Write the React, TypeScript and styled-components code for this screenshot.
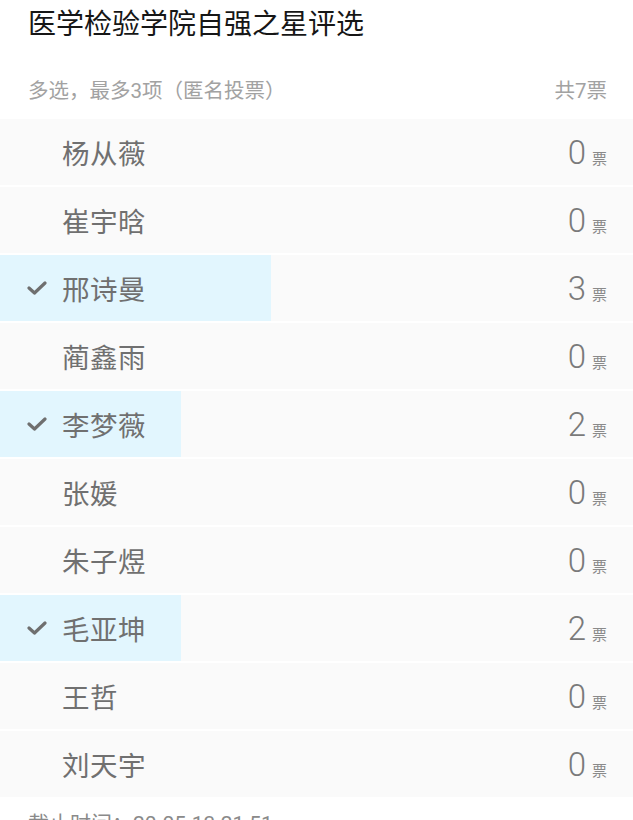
import React from 'react';
import styled, { createGlobalStyle } from 'styled-components';

interface Candidate {
    name: string;
    votes: number;
    picked: boolean;
}

const candidates: Candidate[] = [
    { name: '杨从薇', votes: 0, picked: false },
    { name: '崔宇晗', votes: 0, picked: false },
    { name: '邢诗曼', votes: 3, picked: true },
    { name: '蔺鑫雨', votes: 0, picked: false },
    { name: '李梦薇', votes: 2, picked: true },
    { name: '张媛', votes: 0, picked: false },
    { name: '朱子煜', votes: 0, picked: false },
    { name: '毛亚坤', votes: 2, picked: true },
    { name: '王哲', votes: 0, picked: false },
    { name: '刘天宇', votes: 0, picked: false },
];

const total = candidates.reduce((sum, c) => sum + c.votes, 0);

const GlobalStyle = createGlobalStyle`
    html, body {
        margin: 0;
        padding: 0;
        background: #ffffff;
    }
    body {
        font-family: Roboto, "Noto Sans CJK SC", sans-serif;
        overflow: hidden;
    }
`;

const Page = styled.div`
    width: 633px;
    height: 820px;
    overflow: hidden;
    background: #ffffff;
`;

const Title = styled.h1`
    margin: 0;
    padding: 0 28px;
    height: 50px;
    line-height: 50px;
    font-size: 28px;
    font-weight: 400;
    color: #161616;
`;

const SubBar = styled.div`
    display: flex;
    justify-content: space-between;
    height: 69px;
    box-sizing: border-box;
    padding: 22px 26px 0 28px;
    line-height: 38px;
    font-size: 20.5px;
    color: #a2a2a2;
`;

const List = styled.div`
    display: flex;
    flex-direction: column;
    gap: 2px;
`;

const Row = styled.div<{ $pct: number }>`
    display: flex;
    align-items: center;
    height: 66px;
    padding: 0 26px 0 27px;
    background: linear-gradient(
        to right,
        #e2f6fe 0,
        #e2f6fe ${(p) => p.$pct}%,
        #fafafa ${(p) => p.$pct}%,
        #fafafa 100%
    );
`;

const Check = styled.span`
    display: flex;
    align-items: center;
    width: 35px;
    height: 20px;
    color: #6f6f6f;
`;

const Name = styled.span`
    flex: 1;
    font-size: 27.5px;
    color: #707070;
    letter-spacing: 0.5px;
`;

const Count = styled.span`
    display: flex;
    align-items: baseline;
    gap: 6px;
`;

const Num = styled.span`
    font-size: 33px;
    font-weight: 300;
    color: #7a7a7a;
`;

const Unit = styled.span`
    font-size: 15px;
    color: #8a8a8a;
`;

const Deadline = styled.div`
    padding: 12px 28px 0;
    font-size: 21px;
    line-height: 30px;
    color: #8a8a8a;
`;

const Tick = () => (
    <svg width="20" height="16" viewBox="0 0 20 16">
        <polyline
            points="2,8 7.5,13 18,3"
            fill="none"
            stroke="currentColor"
            strokeWidth="3.2"
            strokeLinecap="round"
            strokeLinejoin="round"
        />
    </svg>
);

export default function App() {
    return (
        <Page>
            <GlobalStyle />
            <Title>医学检验学院自强之星评选</Title>
            <SubBar>
                <span>多选，最多3项（匿名投票）</span>
                <span>共{total}票</span>
            </SubBar>
            <List>
                {candidates.map((c) => (
                    <Row key={c.name} $pct={total ? (c.votes / total) * 100 : 0}>
                        <Check>{c.picked && <Tick />}</Check>
                        <Name>{c.name}</Name>
                        <Count>
                            <Num>{c.votes}</Num>
                            <Unit>票</Unit>
                        </Count>
                    </Row>
                ))}
            </List>
            <Deadline>截止时间：20-05-13 21:51</Deadline>
        </Page>
    );
}
